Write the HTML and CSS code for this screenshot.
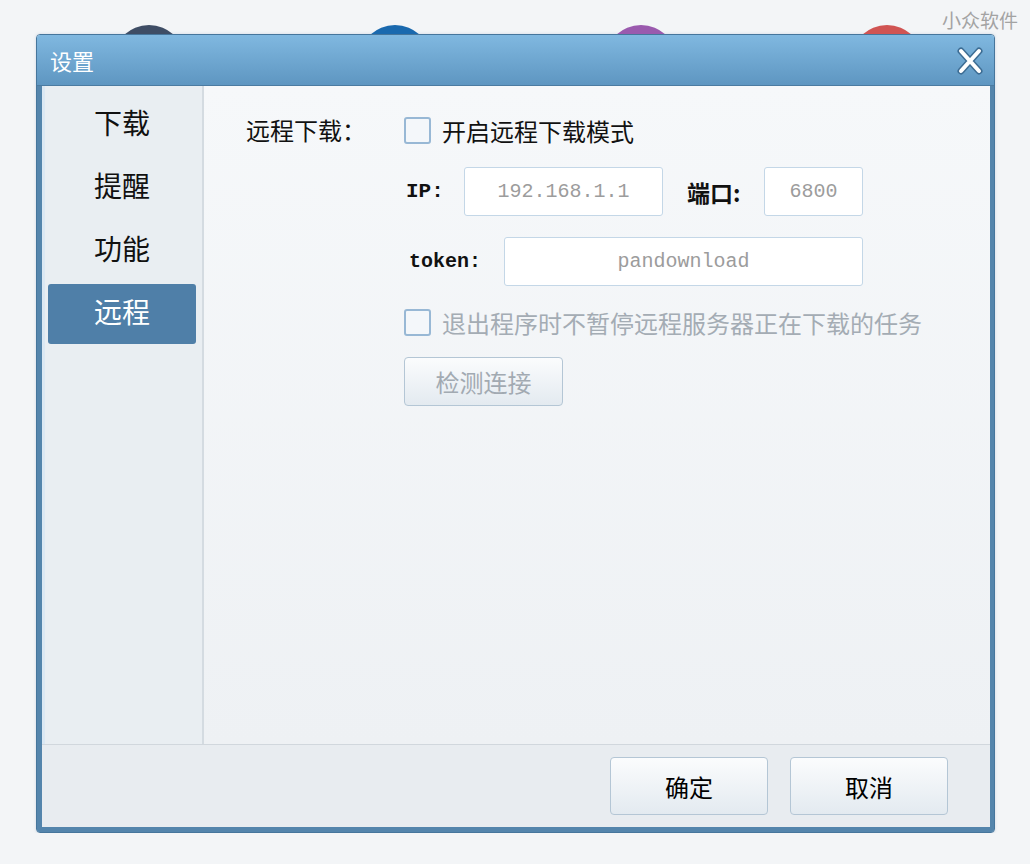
FILE: index.html
```html
<!DOCTYPE html>
<html lang="zh-CN">
<head>
<meta charset="utf-8">
<title>设置</title>
<link rel="stylesheet" href="styles.css">
</head>
<body>

<div class="watermark">小众软件</div>

<div class="page">
  <!-- app icons peeking from behind the dialog -->
  <div class="dots">
    <span class="dot dark"></span>
    <span class="dot blue"></span>
    <span class="dot purple"></span>
    <span class="dot red"></span>
  </div>

  <div class="window">
    <div class="titlebar">
      <span class="title">设置</span>
      <svg class="close" width="28" height="30" viewBox="0 0 28 30">
        <path d="M5 5 L23 25 M23 5 L5 25" stroke="#3d6d94" stroke-width="7" stroke-linecap="round" fill="none"/>
        <path d="M5 5 L23 25 M23 5 L5 25" stroke="#ffffff" stroke-width="4" stroke-linecap="round" fill="none"/>
      </svg>
    </div>

    <div class="frame">
      <div class="main">
        <ul class="sidebar">
          <li>下载</li>
          <li>提醒</li>
          <li>功能</li>
          <li class="active">远程</li>
        </ul>

        <div class="content">
          <div class="section-label">远程下载：</div>
          <div class="fields">
            <div class="check-row first">
              <span class="checkbox"></span>
              <span>开启远程下载模式</span>
            </div>
            <div class="field-row">
              <span class="mono-label ip-label">IP:</span>
              <div class="textbox ip-box">192.168.1.1</div>
              <span class="port-label">端口:</span>
              <div class="textbox port-box">6800</div>
            </div>
            <div class="field-row token-row">
              <span class="mono-label token-label">token:</span>
              <div class="textbox token-box">pandownload</div>
            </div>
            <div class="check-row disabled">
              <span class="checkbox"></span>
              <span>退出程序时不暂停远程服务器正在下载的任务</span>
            </div>
            <div>
              <button class="btn test-btn" type="button">检测连接</button>
            </div>
          </div>
        </div>
      </div>

      <div class="footer">
        <button class="btn footer-btn" type="button">确定</button>
        <button class="btn footer-btn" type="button">取消</button>
      </div>
    </div>
  </div>
</div>

</body>
</html>
```

FILE: styles.css
```css
body {
  margin: 0;
  background-color: #f3f5f7;
  font-family: "Noto Sans CJK SC", "Liberation Sans", sans-serif;
  color: #111111;
}

.watermark {
  position: absolute;
  top: 7px;
  right: 12px;
  font-size: 19px;
  line-height: 26px;
  color: #a3a3a3;
}

.page {
  padding: 25px 0 0 36px;
}

/* Icons behind the dialog */
.dots {
  width: 959px;
  height: 9px;
  overflow: hidden;
  display: flex;
  gap: 174px;
  padding-left: 77px;
  box-sizing: border-box;
}

.dot {
  flex: none;
  width: 72px;
  height: 72px;
  border-radius: 50%;
}

.dot.dark { background-color: #3e4d65; }
.dot.blue { background-color: #1a69ae; }
.dot.purple { background-color: #9a5aae; }
.dot.red { background-color: #d05453; }

/* Window */
.window {
  width: 959px;
  height: 799px;
  box-sizing: border-box;
  border: 1px solid #46769c;
  border-radius: 4px;
  display: flex;
  flex-direction: column;
  overflow: hidden;
  box-shadow: 0 0 3px rgba(90, 130, 170, 0.25);
}

.titlebar {
  flex: none;
  height: 50px;
  border-bottom: 1px solid #4b7ba1;
  background: linear-gradient(#80b8e0, #5e96c1);
  display: flex;
  align-items: center;
  justify-content: space-between;
  padding: 0 10px 0 13px;
}

.title {
  font-size: 22px;
  line-height: 30px;
  color: #ffffff;
}

.close {
  display: block;
  margin-top: 1px;
}

.frame {
  flex: 1;
  display: flex;
  flex-direction: column;
  border-left: 5px solid #5485ac;
  border-right: 4px solid #5485ac;
  border-bottom: 5px solid #5485ac;
  min-height: 0;
}

.main {
  flex: 1;
  display: flex;
  min-height: 0;
}

/* Sidebar */
.sidebar {
  list-style: none;
  margin: 0;
  width: 162px;
  box-sizing: border-box;
  padding: 9px 6px 0 6px;
  background-color: #e9eef2;
  border-right: 2px solid #d4dbe1;
  box-shadow: inset 3px 0 0 #dbe8f3;
}

.sidebar li {
  height: 60px;
  box-sizing: border-box;
  padding-bottom: 5px;
  margin-bottom: 3px;
  line-height: 55px;
  text-align: center;
  font-size: 28px;
  color: #111111;
  border-radius: 3px;
}

.sidebar li.active {
  background-color: #4f7fa8;
  color: #ffffff;
}

/* Content */
.content {
  flex: 1;
  display: flex;
  padding: 31px 0 0 42px;
  background: linear-gradient(#f6f8fa, #eef1f4);
}

.section-label {
  width: 158px;
  flex: none;
  font-size: 24px;
  line-height: 26px;
}

.fields {
  display: flex;
  flex-direction: column;
  gap: 21px;
}

.check-row {
  display: flex;
  align-items: center;
  height: 27px;
  font-size: 24px;
  line-height: 27px;
}

.check-row.first {
  margin-bottom: 2px;
}

.check-row.disabled {
  height: 28px;
  color: #a4acb4;
}

.checkbox {
  width: 27px;
  height: 27px;
  box-sizing: border-box;
  border: 2px solid #98b8d5;
  border-radius: 3px;
  background-color: #f4f7fa;
  margin-right: 11px;
  flex: none;
}

.field-row {
  display: flex;
  align-items: center;
  height: 49px;
}

.token-row {
  margin-bottom: 1px;
}

.mono-label {
  font-family: "Liberation Mono", monospace;
  font-weight: bold;
  font-size: 21px;
  color: #111111;
}

.ip-label {
  width: 58px;
  margin-left: 2px;
}

.token-label {
  width: 95px;
  margin-left: 5px;
  font-size: 20px;
}

.port-label {
  width: 77px;
  margin-left: 24px;
  font-size: 23px;
  font-weight: bold;
}

.textbox {
  height: 49px;
  box-sizing: border-box;
  border: 1px solid #c4d7e7;
  border-radius: 3px;
  background-color: #ffffff;
  font-family: "Liberation Mono", monospace;
  font-size: 20px;
  line-height: 47px;
  color: #9c9c9c;
  text-align: center;
}

.ip-box { width: 199px; }
.port-box { width: 99px; }
.token-box { width: 359px; }

/* Buttons */
.btn {
  font-family: "Noto Sans CJK SC", sans-serif;
  font-size: 24px;
  border: 1px solid #b4c6d5;
  border-radius: 4px;
  background: linear-gradient(#fbfcfd, #e3eaf0);
  padding: 0;
}

.test-btn {
  width: 159px;
  height: 49px;
  color: #a2aab2;
}

/* Footer */
.footer {
  flex: none;
  height: 83px;
  box-sizing: border-box;
  border-top: 1px solid #d1d7dd;
  background-color: #e8ecf0;
  display: flex;
  justify-content: flex-end;
  align-items: flex-start;
  gap: 22px;
  padding: 12px 42px 0 0;
}

.footer-btn {
  width: 158px;
  height: 58px;
  color: #000000;
}
```
